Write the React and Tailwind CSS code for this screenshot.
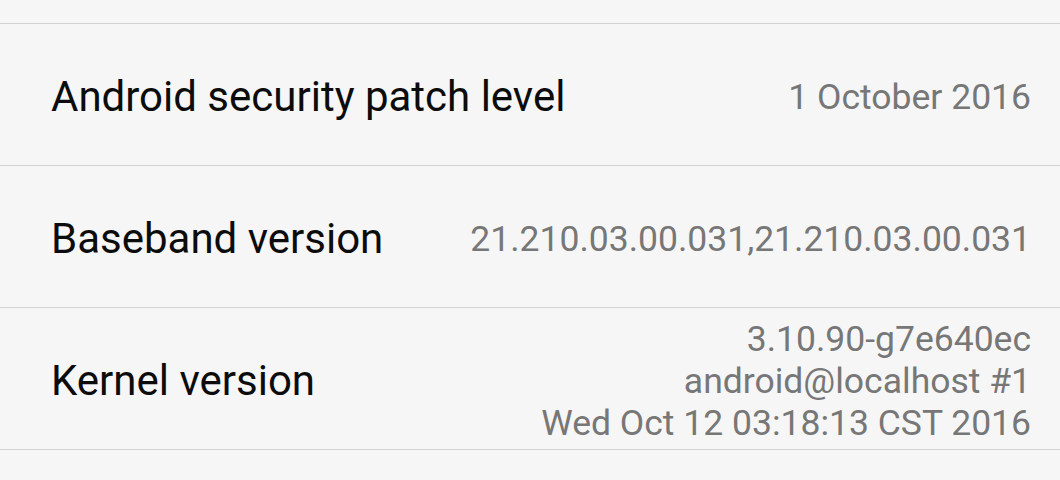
import React from "react";

const rows = [
  { label: "Android security patch level", value: ["1 October 2016"] },
  { label: "Baseband version", value: ["21.210.03.00.031,21.210.03.00.031"] },
  {
    label: "Kernel version",
    value: ["3.10.90-g7e640ec", "android@localhost #1", "Wed Oct 12 03:18:13 CST 2016"],
  },
];

export default function App() {
  return (
    <div
      className="w-[1060px] h-[480px] overflow-hidden bg-[#f6f6f6]"
      style={{ fontFamily: "Roboto, 'Noto Sans', sans-serif" }}
    >
      <div className="h-[23px]" />
      {rows.map((row) => (
        <div
          key={row.label}
          className="h-[142px] border-t border-[#d2d2d2] flex items-center justify-between pl-[51px] pr-[29px]"
        >
          <div className="text-[42px] leading-none text-[#0c0c0c] pt-[4px]">{row.label}</div>
          <div className="text-right text-[35.5px] leading-[42px] text-[#777777] pt-[5px]">
            {row.value.map((line) => (
              <div key={line}>{line}</div>
            ))}
          </div>
        </div>
      ))}
      <div className="border-t border-[#d2d2d2]" />
    </div>
  );
}
